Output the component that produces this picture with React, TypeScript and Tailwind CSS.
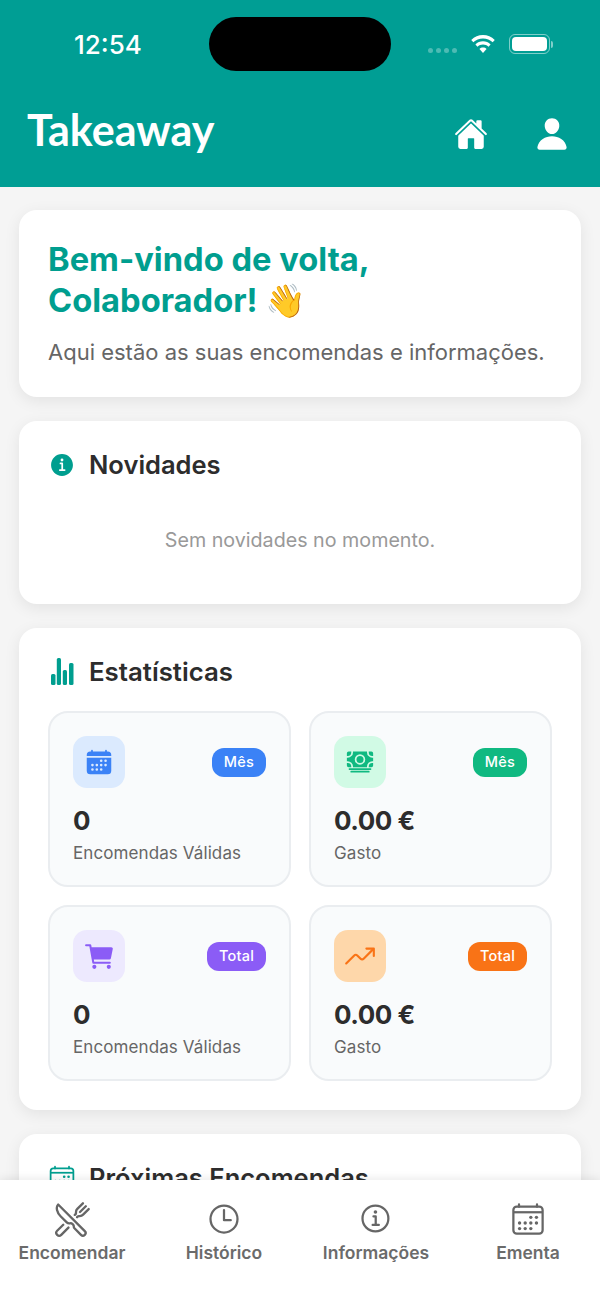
import React from 'react';
import {
  IoHome,
  IoPerson,
  IoInformationCircle,
  IoCalendar,
  IoCash,
  IoCart,
  IoTrendingUp,
  IoCalendarOutline,
  IoRestaurantOutline,
  IoTimeOutline,
  IoInformationCircleOutline,
} from 'react-icons/io5';

const StatCard = ({ icon, iconBg, badge, badgeBg, value, label }: {
  icon: React.ReactNode;
  iconBg: string;
  badge: string;
  badgeBg: string;
  value: string;
  label: string;
}) => (
  <div className="h-[176px] rounded-[20px] border-2 border-[#eaedf0] bg-[#f9fbfc] px-[23px] pt-[23px]">
    <div className="flex items-center justify-between">
      <div className={`flex h-[52px] w-[52px] items-center justify-center rounded-[14px] ${iconBg}`}>{icon}</div>
      <span className={`flex h-[29px] items-center justify-center rounded-[12px] px-[12px] text-[14.5px] font-medium tracking-[0.2px] text-white ${badgeBg}`}>
        {badge}
      </span>
    </div>
    <div className="mt-[15px] text-[26px] leading-[36px] font-bold tracking-[-0.5px] text-[#2d2d2d]">{value}</div>
    <div className="mt-[2px] text-[17px] leading-[24px] tracking-[0.1px] text-[#666666]">{label}</div>
  </div>
);

const NavItem = ({ icon, label }: { icon: React.ReactNode; label: string }) => (
  <div className="flex w-[152px] shrink-0 flex-col items-center">
    <div className="flex h-[44px] items-center justify-center text-[#666666]">{icon}</div>
    <span className="text-[17.5px] leading-[24px] font-semibold text-[#6b6b6b]">{label}</span>
  </div>
);

const Card = ({ className, children }: { className: string; children: React.ReactNode }) => (
  <section className={`rounded-[18px] bg-white shadow-[0_4px_16px_rgba(0,0,0,0.08)] ${className}`}>{children}</section>
);

export default function App() {
  return (
    <div className="flex h-[1299px] w-[600px] flex-col overflow-hidden bg-[#f5f5f5] font-['Inter',sans-serif]">
      <header className="h-[187px] shrink-0 bg-[#009e94]">
        <div className="flex h-[88px] items-center pl-[74px]">
          <span className="w-[135px] text-[26px] font-medium text-white">12:54</span>
          <div className="h-[54px] w-[182px] rounded-[27px] bg-black" />
          <div className="ml-[37px] flex items-center">
            <div className="mt-[13px] flex gap-[3px]">
              <span className="h-[5px] w-[5px] rounded-full bg-white/30" />
              <span className="h-[5px] w-[5px] rounded-full bg-white/30" />
              <span className="h-[5px] w-[5px] rounded-full bg-white/30" />
              <span className="h-[5px] w-[5px] rounded-full bg-white/30" />
            </div>
            <svg className="mt-[1px] ml-[13px]" width="26" height="20" viewBox="0 0 25 19" fill="white">
              <path d="M12.5 3.2c3.6 0 6.9 1.4 9.3 3.700l2-2.200C20.700 1.700 16.800 0 12.500 0S4.300 1.700 1.200 4.700l2 2.200c2.400-2.300 5.700-3.700 9.300-3.700z" />
              <path d="M12.500 9c2 0 3.900.8 5.300 2.100l2-2.200c-1.900-1.800-4.500-2.900-7.300-2.900S7.100 7.100 5.200 8.900l2 2.200C8.600 9.800 10.500 9 12.500 9z" />
              <path d="M12.500 12c-1.300 0-2.500.5-3.400 1.300l3.400 3.800 3.400-3.800c-.9-.8-2.100-1.300-3.400-1.300z" />
            </svg>
            <div className="ml-[13px] flex items-center">
              <div className="h-[20px] w-[41px] rounded-[6px] border border-white/50 p-[2px]">
                <div className="h-full w-full rounded-[4px] bg-white" />
              </div>
              <div className="ml-[1px] h-[7px] w-[2px] rounded-r-full bg-white/50" />
            </div>
          </div>
        </div>
        <div className="flex items-center justify-between pt-[15px] pr-[30px] pl-[27px]">
          <h1 className="font-['Lato',sans-serif] text-[43px] leading-[54px] font-bold text-white">Takeaway</h1>
          <div className="mt-[8px] flex items-center gap-[46px] text-white">
            <IoHome size={34} />
            <IoPerson size={36} />
          </div>
        </div>
      </header>

      <main className="flex min-h-0 flex-1 flex-col gap-[24px] overflow-hidden px-[19px] pt-[23px]">
        <Card className="shrink-0 px-[29px] pt-[29px] pb-[30px]">
          <h2 className="text-[32.7px] leading-[41px] font-bold text-[#009e8f]">
            Bem-vindo de volta,
            <br />
            Colaborador! 👋
          </h2>
          <p className="mt-[16px] text-[22px] leading-[30px] text-[#666666]">Aqui estão as suas encomendas e informações.</p>
        </Card>

        <Card className="h-[183px] shrink-0 px-[29px] pt-[27px]">
          <div className="flex items-center gap-[13px]">
            <IoInformationCircle size={28} className="text-[#009e8f]" />
            <h3 className="text-[25.5px] leading-[34px] font-semibold text-[#2d2d2d]">Novidades</h3>
          </div>
          <p className="mt-[44px] text-center text-[19.7px] leading-[28px] text-[#999999]">Sem novidades no momento.</p>
        </Card>

        <Card className="shrink-0 px-[29px] pt-[27px] pb-[29px]">
          <div className="flex items-center gap-[13px]">
            <svg width="28" height="28" viewBox="0 0 28 28" fill="#009e8f">
              <rect x="3" y="16" width="4.500" height="11" rx="1.500" />
              <rect x="8.800" y="0" width="4.200" height="27" rx="1.500" />
              <rect x="14.800" y="12" width="4.200" height="15" rx="1.500" />
              <rect x="21" y="5" width="4.500" height="22" rx="1.500" />
            </svg>
            <h3 className="text-[25.8px] leading-[34px] font-semibold text-[#2d2d2d]">Estatísticas</h3>
          </div>
          <div className="mt-[22px] grid grid-cols-2 gap-[18px]">
            <StatCard
              icon={<IoCalendar size={28} className="text-[#3b82f6]" />}
              iconBg="bg-[#dbeafe]"
              badge="Mês"
              badgeBg="bg-[#3b82f6]"
              value="0"
              label="Encomendas Válidas"
            />
            <StatCard
              icon={<IoCash size={28} className="text-[#10b981]" />}
              iconBg="bg-[#d1fae5]"
              badge="Mês"
              badgeBg="bg-[#10b981]"
              value="0.00 €"
              label="Gasto"
            />
            <StatCard
              icon={<IoCart size={33} className="text-[#8b5cf6]" />}
              iconBg="bg-[#ede9fe]"
              badge="Total"
              badgeBg="bg-[#8b5cf6]"
              value="0"
              label="Encomendas Válidas"
            />
            <StatCard
              icon={<IoTrendingUp size={34} className="text-[#f97316]" />}
              iconBg="bg-[#fed7aa]"
              badge="Total"
              badgeBg="bg-[#f97316]"
              value="0.00 €"
              label="Gasto"
            />
          </div>
        </Card>

        <Card className="shrink-0 px-[29px] pt-[27px]">
          <div className="flex items-center gap-[13px]">
            <IoCalendarOutline size={28} className="text-[#009e8f]" />
            <h3 className="text-[25.5px] leading-[34px] font-semibold text-[#2d2d2d]">Próximas Encomendas</h3>
          </div>
          <div className="h-[120px]" />
        </Card>
      </main>

      <nav className="relative z-10 flex h-[119px] shrink-0 justify-center bg-white pt-[17px] shadow-[0_-2px_8px_rgba(0,0,0,0.08)]">
        <NavItem icon={<IoRestaurantOutline size={37} />} label="Encomendar" />
        <NavItem icon={<IoTimeOutline size={36} />} label="Histórico" />
        <NavItem icon={<IoInformationCircleOutline size={36} />} label="Informações" />
        <NavItem icon={<IoCalendarOutline size={36} />} label="Ementa" />
      </nav>
    </div>
  );
}
